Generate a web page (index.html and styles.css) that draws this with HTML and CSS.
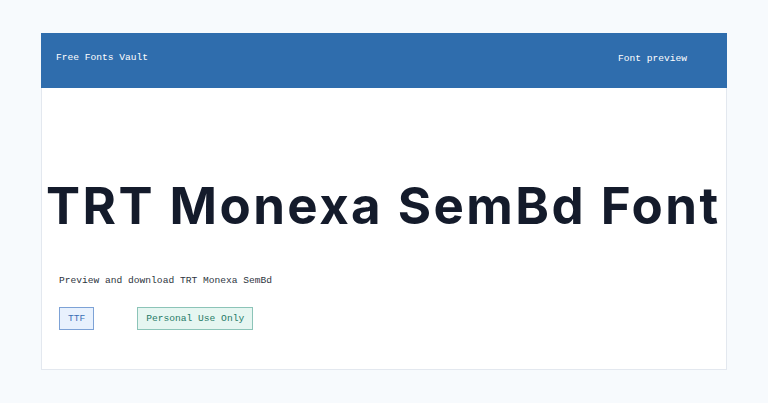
FILE: index.html
```html
<!DOCTYPE html>
<html lang="en">
<head>
    <meta charset="UTF-8">
    <meta name="viewport" content="width=device-width, initial-scale=1.0">
    <title>TRT Monexa SemBd Font</title>
    <link rel="stylesheet" href="styles.css">
</head>
<body>
    <div class="card">
        <header class="topbar">
            <div class="brand">Free Fonts Vault</div>
            <div class="nav">Font preview</div>
        </header>
        <main class="content">
            <h1 class="font-title">TRT Monexa SemBd Font</h1>
            <p class="lead">Preview and download TRT Monexa SemBd</p>
            <div class="tags">
                <span class="tag tag-format">TTF</span>
                <span class="tag tag-license">Personal Use Only</span>
            </div>
        </main>
    </div>
</body>
</html>
```

FILE: styles.css
```css
body {
    margin: 0;
    padding: 33px 41px;
    background-color: #f7fafd;
    font-family: "Liberation Mono", "DejaVu Sans Mono", monospace;
    font-size: 9.6px;
}

.card {
    background-color: #fff;
    border: 1px solid #e3e8ef;
    border-top: none;
    height: 337px;
    box-sizing: border-box;
}

.topbar {
    display: flex;
    justify-content: space-between;
    align-items: center;
    height: 55px;
    padding: 0 40px 0 15px;
    margin: 0 -1px;
    background-color: #2f6dad;
    color: #fff;
}

.brand {
    margin-top: -7px;
}

.nav {
    margin-top: -5px;
}

.content {
    padding: 0 17px;
}

.font-title {
    margin: 86px 0 0 -13px;
    font-family: Inter, "Noto Sans", sans-serif;
    font-size: 51px;
    font-weight: 700;
    letter-spacing: 2.45px;
    line-height: 64px;
    color: #141b2b;
    white-space: nowrap;
}

.lead {
    margin: 37px 0 0;
    color: #2d3440;
}

.tags {
    display: flex;
    gap: 43px;
    margin-top: 21px;
}

.tag {
    display: inline-block;
    padding: 5px 8px;
    line-height: 11px;
    border: 1px solid;
}

.tag-format {
    background-color: #e8f1fd;
    border-color: #7da2d6;
    color: #3a6fb5;
}

.tag-license {
    background-color: #e6f6f1;
    border-color: #8cc4b8;
    color: #1f7a66;
}
```
